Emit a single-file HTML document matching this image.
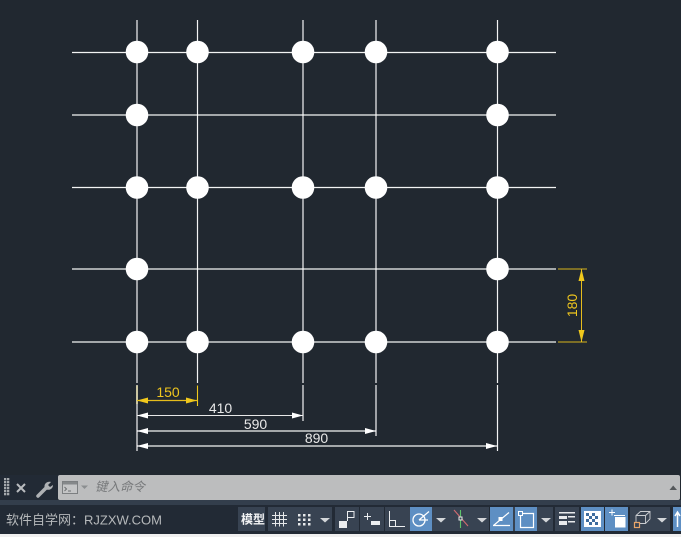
<!DOCTYPE html>
<html><head><meta charset="utf-8"><style>
html,body{margin:0;padding:0;background:#212830;width:681px;height:537px;overflow:hidden}
svg{display:block;position:absolute;left:0;top:0}
text{font-family:"Liberation Sans","Noto Sans CJK SC",sans-serif}
</style></head><body>
<svg width="681" height="537" viewBox="0 0 681 537" xmlns="http://www.w3.org/2000/svg">
<rect width="681" height="537" fill="#212830"/>
<!-- horizontals -->
<g stroke="#fff" stroke-width="1.2" opacity="0.95">
<path d="M72 52.500H556M72 115H556M72 187.500H556M72 269H556M72 342H556"/>
</g>
<!-- verticals -->
<g stroke="#fff" stroke-width="1.2" opacity="0.95">
<path d="M137 20V383M197.500 20V383M303 20V383M376 20V383M497.500 20V383"/>
<path d="M137 385V451M303 385V421M376 385V436M497.500 385V451"/>
</g>
<path d="M197.500 385.500V406" stroke="#f0c81c" stroke-width="1.100"/>
<path d="M137 385.500V404" stroke="#f6eeba" stroke-width="1.500"/>
<!-- circles -->
<g fill="#fff">
<circle cx="137" cy="52" r="11.300"/><circle cx="197.500" cy="52" r="11.300"/><circle cx="303" cy="52" r="11.300"/><circle cx="376" cy="52" r="11.300"/><circle cx="497.500" cy="52" r="11.300"/>
<circle cx="137" cy="115" r="11.300"/><circle cx="497.500" cy="115" r="11.300"/>
<circle cx="137" cy="187.500" r="11.300"/><circle cx="197.500" cy="187.500" r="11.300"/><circle cx="303" cy="187.500" r="11.300"/><circle cx="376" cy="187.500" r="11.300"/><circle cx="497.500" cy="187.500" r="11.300"/>
<circle cx="137" cy="269" r="11.300"/><circle cx="497.500" cy="269" r="11.300"/>
<circle cx="137" cy="342" r="11.300"/><circle cx="197.500" cy="342" r="11.300"/><circle cx="303" cy="342" r="11.300"/><circle cx="376" cy="342" r="11.300"/><circle cx="497.500" cy="342" r="11.300"/>
</g>
<!-- dim 150 -->
<path d="M137 400.500H197" stroke="#e6bd1c" stroke-width="1.200"/>
<path d="M137 400.500L148 397.500V403.500ZM197 400.500L186 397.500V403.500Z" fill="#f0c81c"/>
<text x="168" y="397" font-size="14" fill="#eec51e" text-anchor="middle">150</text>
<!-- dim 410 -->
<path d="M137 415.500H303" stroke="#e8e8e8" stroke-width="1"/>
<path d="M137 415.500L148 412.500V418.500ZM303 415.500L292 412.500V418.500Z" fill="#fff"/>
<text x="220.500" y="413" font-size="14" fill="#e8e8e8" text-anchor="middle">410</text>
<!-- dim 590 -->
<path d="M137 431H376" stroke="#fff" stroke-width="1.200" opacity="0.95"/>
<path d="M137 431L148 428V434ZM376 431L365 428V434Z" fill="#fff"/>
<text x="255.500" y="429" font-size="14" fill="#e8e8e8" text-anchor="middle">590</text>
<!-- dim 890 -->
<path d="M137 446H497" stroke="#fff" stroke-width="1.200" opacity="0.95"/>
<path d="M137 446L148 443V449ZM497 446L486 443V449Z" fill="#fff"/>
<text x="316.500" y="443" font-size="14" fill="#e8e8e8" text-anchor="middle">890</text>
<!-- dim 180 -->
<path d="M558 269H587M558 342H587" stroke="#f0c81c" stroke-width="1.200" opacity="0.7"/>
<path d="M581.500 269V342" stroke="#e6bd1c" stroke-width="1"/>
<path d="M581.500 269L578.500 281H584.500ZM581.500 342L578.500 330H584.500Z" fill="#f0c81c"/>
<text transform="translate(577,305.500) rotate(-90)" font-size="14" fill="#eec51e" text-anchor="middle">180</text>

<!-- command line -->
<rect x="0" y="475" width="58" height="25" fill="#222a35"/>
<g fill="#a4a8ac"><rect x="4" y="478" width="2.300" height="2.300"/><rect x="7" y="478" width="2.300" height="2.300"/><rect x="4" y="481" width="2.300" height="2.300"/><rect x="7" y="481" width="2.300" height="2.300"/><rect x="4" y="484" width="2.300" height="2.300"/><rect x="7" y="484" width="2.300" height="2.300"/><rect x="4" y="487" width="2.300" height="2.300"/><rect x="7" y="487" width="2.300" height="2.300"/><rect x="4" y="490" width="2.300" height="2.300"/><rect x="7" y="490" width="2.300" height="2.300"/><rect x="4" y="493" width="2.300" height="2.300"/><rect x="7" y="493" width="2.300" height="2.300"/></g>
<path d="M17 484L25 492M25 484L17 492" stroke="#b9bcbf" stroke-width="2"/>
<path d="M38 496L46 488" stroke="#aeb1b4" stroke-width="3.500" stroke-linecap="round"/>
<path d="M45 489C43 484 47 481 51 482L48 485L50 487L53 485C53 489 49 491 45 489Z" fill="#aeb1b4"/>
<rect x="58" y="475" width="622" height="25" rx="2" fill="#bcbdbe"/>
<rect x="62.500" y="481.500" width="15" height="12" fill="#c4c5c6" stroke="#7c7f81"/>
<rect x="63" y="482" width="14" height="2.500" fill="#85888a"/>
<path d="M64.500 487L66.500 489L64.500 491M68 491H71" stroke="#6c6f71" stroke-width="1" fill="none"/>
<path d="M81 485.500H88L84.500 489Z" fill="#8b8e90"/>
<text x="95" y="491" font-size="12.500" font-style="italic" fill="#77797b" font-family="'Noto Sans CJK SC',sans-serif">键入命令</text>
<path d="M669.500 490H677L673.200 485.500Z" fill="#55585b"/>

<!-- bands -->
<rect x="0" y="500" width="681" height="5" fill="#333e4c"/>
<rect x="0" y="505" width="681" height="29" fill="#222a35"/>
<rect x="0" y="534" width="681" height="3" fill="#f0f0f0"/>
<text x="6" y="524.500" font-size="13" fill="#b6b9bb">软件自学网：RJZXW.COM</text>

<!-- status buttons -->
<g fill="#384352">
<rect x="238" y="507" width="27" height="24"/>
<rect x="268" y="507" width="64" height="24"/>
<rect x="335" y="507" width="24" height="24"/>
<rect x="360" y="507" width="24" height="24"/>
<rect x="385" y="507" width="104" height="24"/>
<rect x="490" y="507" width="63" height="24"/>
<rect x="555" y="507" width="24" height="24"/>
<rect x="630" y="507" width="40" height="24"/>
</g>
<g fill="#5e8fc3">
<rect x="410" y="507" width="22" height="24"/>
<rect x="490" y="507" width="23" height="24"/>
<rect x="515" y="507" width="22" height="24"/>
<rect x="581" y="507" width="23" height="24"/>
<rect x="605" y="507" width="23" height="24"/>
<rect x="673" y="507" width="8" height="24"/>
</g>
<text x="241" y="523.500" font-size="12" font-weight="bold" fill="#f2f3f4">模型</text>
<!-- grid icon -->
<path d="M275.500 512V526.500M279.500 512V526.500M283.500 512V526.500M272 515.500H287M272 519.500H287M272 523.500H287" stroke="#e6e8ea" stroke-width="1" fill="none"/>
<!-- snap dots -->
<g fill="#e6e8ea"><rect x="298" y="514" width="2.500" height="2.500"/><rect x="303" y="514" width="2.500" height="2.500"/><rect x="308" y="514" width="2.500" height="2.500"/><rect x="298" y="518.500" width="2.500" height="2.500"/><rect x="303" y="518.500" width="2.500" height="2.500"/><rect x="308" y="518.500" width="2.500" height="2.500"/><rect x="298" y="523" width="2.500" height="2.500"/><rect x="303" y="523" width="2.500" height="2.500"/><rect x="308" y="523" width="2.500" height="2.500"/></g>
<g fill="#d3d6d9">
<path d="M320 518H330L325 522.500Z"/><path d="M436 518H446L441 522.500Z"/><path d="M477 518H487L482 522.500Z"/><path d="M541 518H551L546 522.500Z"/><path d="M657 518H667L662 522.500Z"/>
</g>
<!-- infer -->
<rect x="339" y="521" width="8" height="7" fill="#eceef0"/>
<path d="M347.500 521V511.500H354V517.500H347.500" stroke="#eceef0" fill="none"/>
<!-- dyn -->
<path d="M364 516.500H371M367.500 513V520" stroke="#eceef0"/>
<rect x="371" y="521" width="9" height="4" fill="#eceef0"/>
<!-- ortho -->
<path d="M389.500 511V526.500H405" stroke="#eceef0" fill="none"/>
<path d="M389.500 520.500H395.500V526.500" stroke="#eceef0" fill="none"/>
<!-- polar -->
<circle cx="419" cy="520" r="6" fill="none" stroke="#fff" stroke-width="1.300"/>
<path d="M419 520L429 511.500M419 520H428" stroke="#fff" stroke-width="1.200"/>
<!-- osnap tracking -->
<path d="M454 510L468 526" stroke="#d06a70" stroke-width="1.100"/>
<path d="M460.500 510V528" stroke="#5cc46a" stroke-width="1.100"/>
<rect x="459" y="517" width="3" height="3" fill="#384352" stroke="#e8e8e8"/>
<!-- angle -->
<path d="M493.500 525.500L509 512.500M493 525.500H510" stroke="#fff" stroke-width="1.200" fill="none"/>
<rect x="498.500" y="517" width="4" height="4" fill="#fff"/>
<!-- rect osnap -->
<path d="M520.500 513.500H533.500V527.500H520.500V516" stroke="#fff" fill="none" stroke-width="1.200"/>
<rect x="518.500" y="511.500" width="4" height="4" fill="#5e8fc3" stroke="#fff"/>
<!-- lineweight -->
<g fill="#e8eaec"><rect x="559" y="512" width="16" height="1.500"/><rect x="559" y="516" width="8" height="3"/><rect x="568" y="516" width="7" height="1.500"/><rect x="559" y="521" width="8" height="4"/><rect x="568" y="521" width="7" height="1.500"/></g>
<!-- transparency -->
<rect x="584" y="511" width="17" height="16" fill="#fff"/>
<g fill="#3e6c9e"><rect x="586" y="513" width="3" height="3"/><rect x="592" y="513" width="3" height="3"/><rect x="589" y="516" width="3" height="3"/><rect x="595" y="516" width="3" height="3"/><rect x="586" y="519" width="3" height="3"/><rect x="592" y="519" width="3" height="3"/><rect x="589" y="522" width="3" height="3"/><rect x="595" y="522" width="3" height="3"/></g>
<!-- selection cycling -->
<path d="M609 512.500H615M612 509.500V515.500" stroke="#fff"/>
<path d="M614 515.500H625" stroke="#fff"/>
<rect x="615" y="517" width="10.500" height="10.500" fill="#fff"/>
<!-- 3d osnap -->
<path d="M636 522V515.500L640.500 511.500H650V519L645.500 523.500H640M636 515.500H645.500V523.500M645.500 515.500L650 511.500" stroke="#c9ccd0" fill="none" stroke-width="0.900"/>
<rect x="634.500" y="522.500" width="5" height="5" fill="#384352" stroke="#eaa66a" stroke-width="1.200"/>
<!-- last icon -->
<path d="M675 516L677.500 512L680 516M677.500 513V527" stroke="#fff" stroke-width="1.500" fill="none"/>
</svg>
</body></html>
